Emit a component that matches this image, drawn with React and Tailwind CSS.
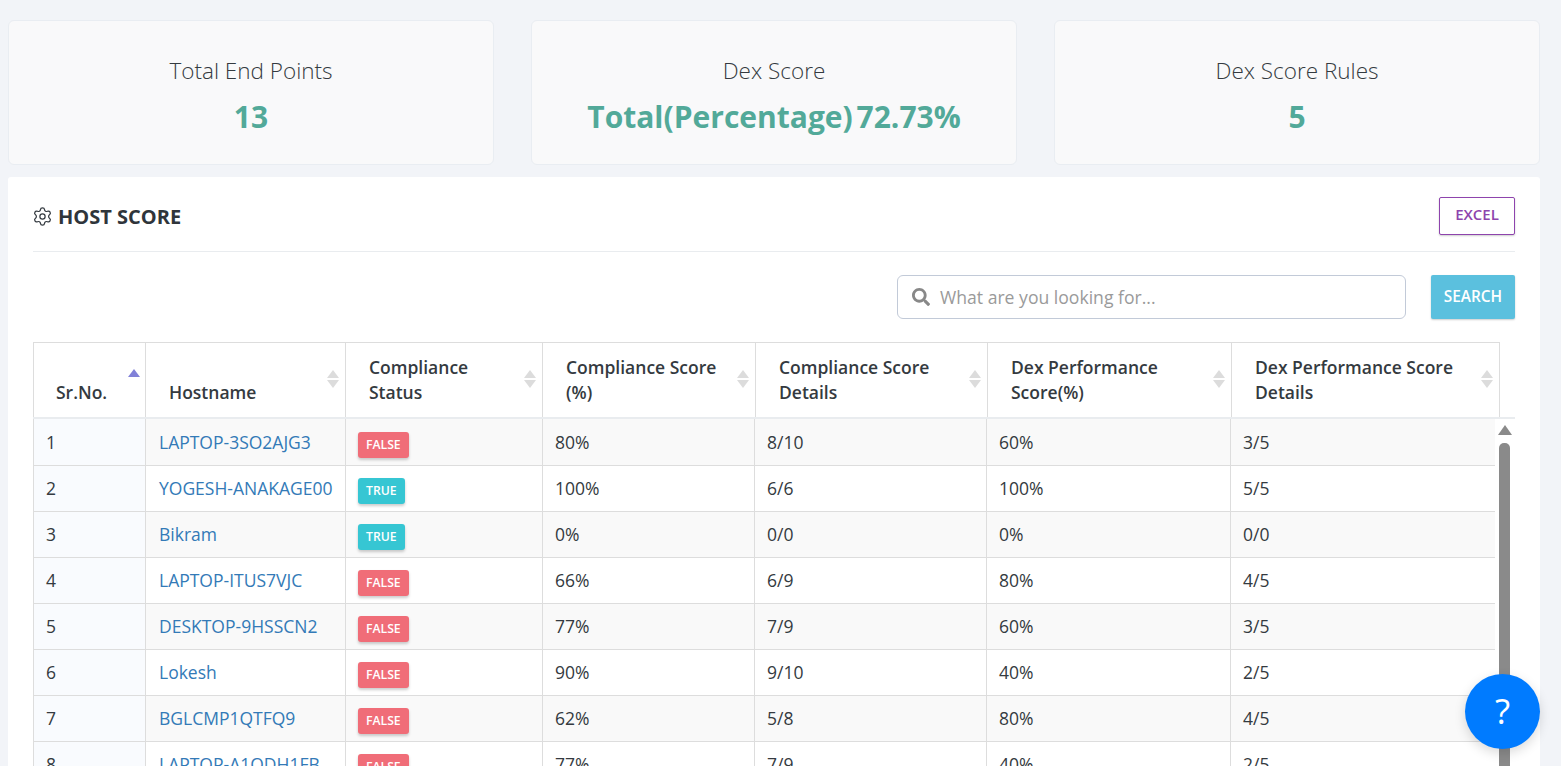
import React from 'react';
import { Settings } from 'lucide-react';
import { FaSearch } from 'react-icons/fa';

const stats = [
  { title: 'Total End Points', value: '13' },
  { title: 'Dex Score', value: 'Total(Percentage) 72.73%' },
  { title: 'Dex Score Rules', value: '5' }
];

const columns = [
  { label: ['Sr.No.'], width: 'w-[112px]', pad: 'pl-[22px]', active: true },
  { label: ['Hostname'], width: 'w-[200px]', pad: 'pl-[23px]' },
  { label: ['Compliance', 'Status'], width: 'w-[197px]', pad: 'pl-[23px]' },
  { label: ['Compliance Score', '(%)'], width: 'w-[213px]', pad: 'pl-[23px]' },
  { label: ['Compliance Score', 'Details'], width: 'w-[232px]', pad: 'pl-[23px]' },
  { label: ['Dex Performance', 'Score(%)'], width: 'w-[244px]', pad: 'pl-[23px]' },
  { label: ['Dex Performance Score', 'Details'], width: 'w-[268px]', pad: 'pl-[23px]' }
];

const rows = [
  [1, 'LAPTOP-3SO2AJG3', false, '80%', '8/10', '60%', '3/5'],
  [2, 'YOGESH-ANAKAGE00', true, '100%', '6/6', '100%', '5/5'],
  [3, 'Bikram', true, '0%', '0/0', '0%', '0/0'],
  [4, 'LAPTOP-ITUS7VJC', false, '66%', '6/9', '80%', '4/5'],
  [5, 'DESKTOP-9HSSCN2', false, '77%', '7/9', '60%', '3/5'],
  [6, 'Lokesh', false, '90%', '9/10', '40%', '2/5'],
  [7, 'BGLCMP1QTFQ9', false, '62%', '5/8', '80%', '4/5'],
  [8, 'LAPTOP-A1QDH1FB', false, '77%', '7/9', '40%', '2/5']
];

const SortIcon = ({ active }) => (
  <span className="absolute right-[6px] top-[27px] flex flex-col gap-[2px]">
    <span className={`w-0 h-0 border-x-[6px] border-x-transparent border-b-[8px] ${active ? 'border-b-[#8181d8] -mt-[1px] -mr-[1px]' : 'border-b-[#dcdcdc]'}`} />
    {!active && <span className="w-0 h-0 border-x-[6px] border-x-transparent border-t-[8px] border-t-[#dcdcdc]" />}
  </span>
);

const StatusBadge = ({ ok }) => (
  <span className={`inline-flex items-center h-[26px] px-2 rounded-[3px] text-[12.2px] font-semibold text-white shadow-[0_2px_3px_rgba(0,0,0,0.2)] ${ok ? 'bg-[#36c6d3]' : 'bg-[#f06d78]'}`}>
    {ok ? 'TRUE' : 'FALSE'}
  </span>
);

export default function App() {
  return (
    <div className="h-[766px] overflow-hidden bg-[#f2f4f8] px-2 pt-5 font-['Open_Sans',sans-serif] text-[#343a40] relative">
      {/* Stat cards */}
      <div className="w-[1532px] flex justify-between">
        {stats.map((s) => (
          <div key={s.title} className="w-[486px] h-[145px] bg-[#f9f9fa] border border-[#e9edf2] rounded-[6px] flex flex-col items-center pt-[32px]">
            <div className="text-[22.5px] leading-[36px] font-light text-[#343a40]">{s.title}</div>
            <div className="mt-[8px] text-[30px] leading-[40px] font-bold text-[#52a999] [word-spacing:-4px]">{s.value}</div>
          </div>
        ))}
      </div>

      {/* Host score panel */}
      <div className="mt-3 bg-white rounded-t-[3px] w-[1532px] px-[25px] h-[600px]">
        <div className="h-[75px] pt-5 border-b border-[#e9ecef] flex justify-between">
          <div className="flex items-center h-[38px] gap-[5px] pt-[1px]">
            <Settings size={21} strokeWidth={1.4} className="text-[#343a40] -ml-[1px]" />
            <span className="text-[20px] font-bold text-[#2f353b]">HOST SCORE</span>
          </div>
          <button className="w-[76px] h-[38px] pb-[3px] border border-[#8e44ad] rounded-[2px] text-[15px] font-semibold text-[#8e44ad] bg-white shadow-[0_1px_2px_rgba(0,0,0,0.2)]">
            EXCEL
          </button>
        </div>

        {/* Search */}
        <div className="flex justify-end gap-[25px] mt-[23px]">
          <div className="w-[509px] h-[44px] border border-[#c2cad8] rounded-[6px] flex items-center pl-[14px] gap-[10px]">
            <FaSearch size={18} className="text-[#888888]" />
            <span className="text-[17.6px] text-[#9a9a9a]">What are you looking for...</span>
          </div>
          <button className="w-[84px] h-[44px] bg-[#5bc0de] rounded-[2px] text-[15.4px] font-semibold text-white shadow-[0_1px_2px_rgba(0,0,0,0.2)]">
            SEARCH
          </button>
        </div>

        {/* Table header */}
        <table className="mt-[23px] w-[1467px] table-fixed border-collapse">
          <thead>
            <tr className="h-[76px]">
              {columns.map((c) => (
                <th key={c.label[0] + c.label[1]} className={`${c.width} ${c.pad} relative border border-[#dddddd] align-bottom pb-[13px] text-left text-[17.5px] leading-[25px] font-semibold text-[#343a40]`}>
                  {c.label.map((l) => <div key={l}>{l}</div>)}
                  <SortIcon active={c.active} />
                </th>
              ))}
            </tr>
          </thead>
        </table>

        {/* Table body with scrollbar */}
        <div className="flex border-t-2 border-[#e9ecef] -mt-[2px]">
          <table className="w-[1461px] table-fixed border-collapse self-start">
            <colgroup>
              <col className="w-[112px]" />
              <col className="w-[200px]" />
              <col className="w-[197px]" />
              <col className="w-[212px]" />
              <col className="w-[232px]" />
              <col className="w-[244px]" />
              <col className="w-[264px]" />
            </colgroup>
            <tbody>
              {rows.map((r, i) => (
                <tr key={r[0]} className={`h-[46px] ${i % 2 === 0 ? 'bg-[#f9f9f9]' : 'bg-white'}`}>
                  <td className="border border-[#dddddd] border-t-0 pl-3 pt-[1px] text-[17.5px] text-[#343a40] bg-[#f9fbfe]">{r[0]}</td>
                  <td className="border border-[#dddddd] border-t-0 pl-[13px] pt-[1px] text-[17.5px] text-[#337ab7] whitespace-nowrap">{r[1]}</td>
                  <td className="border border-[#dddddd] border-t-0 pl-3 pt-[5px]"><StatusBadge ok={r[2]} /></td>
                  {r.slice(3).map((v, j) => (
                    <td key={j} className="border border-[#dddddd] border-t-0 border-r-0 pl-3 pt-[1px] text-[17.5px] text-[#343a40]">{v}</td>
                  ))}
                </tr>
              ))}
            </tbody>
          </table>
          <div className="w-[21px] flex flex-col items-start pl-[4px] pt-[6px]">
            <span className="w-0 h-0 border-x-[7px] border-x-transparent border-b-[10px] border-b-[#8a8a8a] -ml-[1px]" />
            <span className="mt-[8px] w-[11px] h-[400px] rounded-t-[5px] bg-[#8a8a8a]" />
          </div>
        </div>
      </div>

      {/* Help button */}
      <div className="absolute left-[1465px] top-[674px] w-[75px] h-[75px] rounded-full bg-[#007bff] flex items-center justify-center text-white text-[35px] shadow-[0_4px_12px_rgba(0,0,0,0.15)]">
        ?
      </div>
    </div>
  );
}
